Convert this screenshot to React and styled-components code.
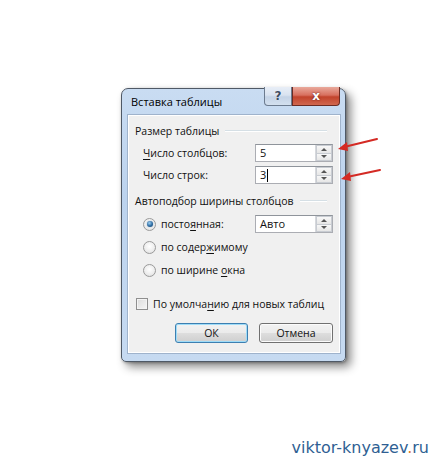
import styled, { createGlobalStyle } from "styled-components";

const GlobalStyle = createGlobalStyle`
  html, body {
    margin: 0;
    padding: 0;
    background: #ffffff;
  }
  body {
    font-family: "Open Sans", "Noto Sans", sans-serif;
  }
`;

const Page = styled.div`
  position: relative;
  width: 432px;
  height: 461px;
  box-sizing: border-box;
  padding: 88px 0 0 121px;
  display: flex;
  flex-direction: column;
  overflow: hidden;
`;

const Window = styled.div`
  width: 225px;
  height: 274px;
  box-sizing: border-box;
  border: 1px solid #4f5966;
  border-radius: 7px 7px 5px 5px;
  background: linear-gradient(180deg, #c9dcf2 0%, #bcd3ee 40%, #c6daf1 100%);
  box-shadow: 5px 5px 10px rgba(0, 0, 0, 0.45), 1px 1px 3px rgba(0, 0, 0, 0.3);
  padding: 0 4px 7px 5px;
  display: flex;
  flex-direction: column;
`;

const TitleBar = styled.div`
  height: 25px;
  display: flex;
  align-items: flex-start;
  justify-content: space-between;
`;

const Title = styled.span`
  font-size: 11px;
  color: #000;
  padding: 5px 0 0 4px;
  line-height: 16px;
`;

const Caption = styled.div`
  display: flex;
  margin-top: -2px;
  margin-right: 1px;
`;

const CapButton = styled.div`
  width: ${(p) => (p.$close ? "48px" : "28px")};
  height: 19px;
  box-sizing: border-box;
  border: 1px solid ${(p) => (p.$close ? "#6b2b23" : "#6c7b8f")};
  border-top: none;
  border-radius: ${(p) => (p.$close ? "0 0 4px 0" : "0 0 0 4px")};
  background: ${(p) =>
    p.$close
      ? "linear-gradient(180deg, #e9a99c 0%, #d8705f 45%, #c2432c 55%, #d0674e 100%)"
      : "linear-gradient(180deg, #e8eef7 0%, #d9e3f0 45%, #c4d3e6 55%, #d3e0ef 100%)"};
  display: flex;
  align-items: center;
  justify-content: center;
  color: ${(p) => (p.$close ? "#fff" : "#3d4d63")};
  font-family: "DejaVu Sans", sans-serif;
  font-weight: bold;
  font-size: 12px;
  text-shadow: ${(p) => (p.$close ? "0 0 2px #5a1a10" : "0 0 1px #fff")};
`;

const Content = styled.div`
  flex: 1;
  border: 1px solid #9fb3cc;
  background: #f0f0f0;
  box-shadow: inset 0 0 0 1px #ffffff;
  display: flex;
  flex-direction: column;
  font-size: 10.5px;
  color: #111;
`;

const Legend = styled.div`
  display: flex;
  align-items: center;
  height: 16px;
  margin: ${(p) => p.$mt}px 13px 0 7px;
  line-height: 16px;
`;

const LegendLine = styled.div`
  flex: 1;
  height: 1px;
  margin-left: 6px;
  background: #d5dfe5;
  border-bottom: 1px solid #ffffff;
`;

const FieldRow = styled.div`
  display: flex;
  align-items: center;
  justify-content: space-between;
  height: 18px;
  margin: ${(p) => p.$mt}px 7px 0 ${(p) => p.$ml ?? 15}px;
`;

const Label = styled.span`
  display: flex;
  align-items: center;
  gap: 5px;
  white-space: nowrap;
`;

const Key = styled.u`
  text-underline-offset: 2px;
`;

const Spin = styled.div`
  width: 78px;
  height: 18px;
  box-sizing: border-box;
  border: 1px solid #abadb3;
  border-top-color: #8f949b;
  background: #fff;
  display: flex;
`;

const SpinText = styled.div`
  flex: 1;
  padding-left: 4px;
  line-height: 16px;
  font-size: 11px;
  display: flex;
  align-items: center;
`;

const Caret = styled.span`
  display: inline-block;
  width: 1px;
  height: 13px;
  margin-left: 1px;
  background: #000;
`;

const SpinArrows = styled.div`
  width: 16px;
  display: flex;
  flex-direction: column;
  border-left: 1px solid #d6d8dc;
`;

const Arrow = styled.div`
  flex: 1;
  display: flex;
  align-items: center;
  justify-content: center;
  background: linear-gradient(180deg, #f8f8f8, #e6e6e6);
  border: 1px solid #c8ccd2;
  & + & {
    border-top: none;
  }
  &::after {
    content: "";
    border-left: 3px solid transparent;
    border-right: 3px solid transparent;
    ${(p) =>
      p.$down
        ? "border-top: 3px solid #555;"
        : "border-bottom: 3px solid #555;"}
  }
`;

const Radio = styled.span`
  width: 13px;
  height: 13px;
  box-sizing: border-box;
  border-radius: 50%;
  border: 1px solid #9a9a9a;
  background: radial-gradient(circle at 50% 40%, #ffffff 0%, #ececec 60%, #d8d8d8 100%);
  display: flex;
  align-items: center;
  justify-content: center;
  &::after {
    content: "";
    display: ${(p) => (p.$on ? "block" : "none")};
    width: 6px;
    height: 6px;
    border-radius: 50%;
    background: radial-gradient(circle at 40% 35%, #9ed0f3 0%, #2c6aa0 55%, #14406a 100%);
    box-shadow: 0 0 1px #3a6d9c;
  }
`;

const Check = styled.span`
  width: 12px;
  height: 12px;
  box-sizing: border-box;
  border: 1px solid #8f8f8f;
  background: linear-gradient(135deg, #dcdcdc 0%, #f6f6f6 100%);
  box-shadow: inset 0 0 0 1px #f4f4f4;
`;

const Buttons = styled.div`
  display: flex;
  justify-content: flex-end;
  gap: 11px;
  margin: 10px 7px 0 0;
`;

const Button = styled.div`
  width: ${(p) => p.$w}px;
  height: 20px;
  box-sizing: border-box;
  border: 1px solid ${(p) => (p.$def ? "#3c7fb1" : "#707070")};
  border-radius: 3px;
  background: linear-gradient(180deg, #f2f2f2 0%, #ebebeb 48%, #dddddd 52%, #cfcfcf 100%);
  box-shadow: inset 0 0 0 1px ${(p) => (p.$def ? "#9fdcf8" : "#fbfbfb")};
  display: flex;
  align-items: center;
  justify-content: center;
  font-size: 10.5px;
  color: #111;
`;

const Watermark = styled.div`
  align-self: flex-end;
  margin: 76px 3px 0 0;
  font-family: "DejaVu Sans", Verdana, sans-serif;
  font-size: 16px;
  color: #2f5f93;
  line-height: 20px;
`;

const Dot = styled.span`
  color: #d9792a;
`;

const Arrows = styled.svg`
  position: absolute;
  left: 0;
  top: 0;
  pointer-events: none;
`;

export default function App() {
  return (
    <>
      <GlobalStyle />
      <Page>
        <Window>
          <TitleBar>
            <Title>Вставка таблицы</Title>
            <Caption>
              <CapButton>?</CapButton>
              <CapButton $close>x</CapButton>
            </Caption>
          </TitleBar>
          <Content>
            <Legend $mt={8}>
              Размер таблицы
              <LegendLine />
            </Legend>
            <FieldRow $mt={5}>
              <Label>
                <span>
                  <Key>Ч</Key>исло столбцов:
                </span>
              </Label>
              <Spin>
                <SpinText>5</SpinText>
                <SpinArrows>
                  <Arrow />
                  <Arrow $down />
                </SpinArrows>
              </Spin>
            </FieldRow>
            <FieldRow $mt={4}>
              <Label>
                <span>Число строк:</span>
              </Label>
              <Spin>
                <SpinText>
                  3<Caret />
                </SpinText>
                <SpinArrows>
                  <Arrow />
                  <Arrow $down />
                </SpinArrows>
              </Spin>
            </FieldRow>
            <Legend $mt={9}>
              Автоподбор ширины столбцов
              <LegendLine />
            </Legend>
            <FieldRow $mt={6}>
              <Label>
                <Radio $on />
                <span>
                  посто<Key>я</Key>нная:
                </span>
              </Label>
              <Spin>
                <SpinText>Авто</SpinText>
                <SpinArrows>
                  <Arrow />
                  <Arrow $down />
                </SpinArrows>
              </Spin>
            </FieldRow>
            <FieldRow $mt={5}>
              <Label>
                <Radio />
                <span>
                  по содер<Key>ж</Key>имому
                </span>
              </Label>
            </FieldRow>
            <FieldRow $mt={5}>
              <Label>
                <Radio />
                <span>
                  по ширине <Key>о</Key>кна
                </span>
              </Label>
            </FieldRow>
            <FieldRow $mt={16} $ml={8}>
              <Label>
                <Check />
                <span>
                  По умолча<Key>н</Key>ию для новых таблиц
                </span>
              </Label>
            </FieldRow>
            <Buttons>
              <Button $w={73} $def>
                ОК
              </Button>
              <Button $w={74}>Отмена</Button>
            </Buttons>
          </Content>
        </Window>
        <Watermark>
          viktor-knyazev<Dot>.</Dot>ru
        </Watermark>
        <Arrows width="432" height="461" viewBox="0 0 432 461">
          <g stroke="#d42a24" strokeWidth="2" strokeLinecap="round" fill="#d42a24">
            <line x1="377" y1="139" x2="344" y2="147" />
            <polygon points="338,149 347,142 348,151" stroke="none" />
            <line x1="380" y1="170" x2="347" y2="177" />
            <polygon points="341,179 350,172 351,181" stroke="none" />
          </g>
        </Arrows>
      </Page>
    </>
  );
}
